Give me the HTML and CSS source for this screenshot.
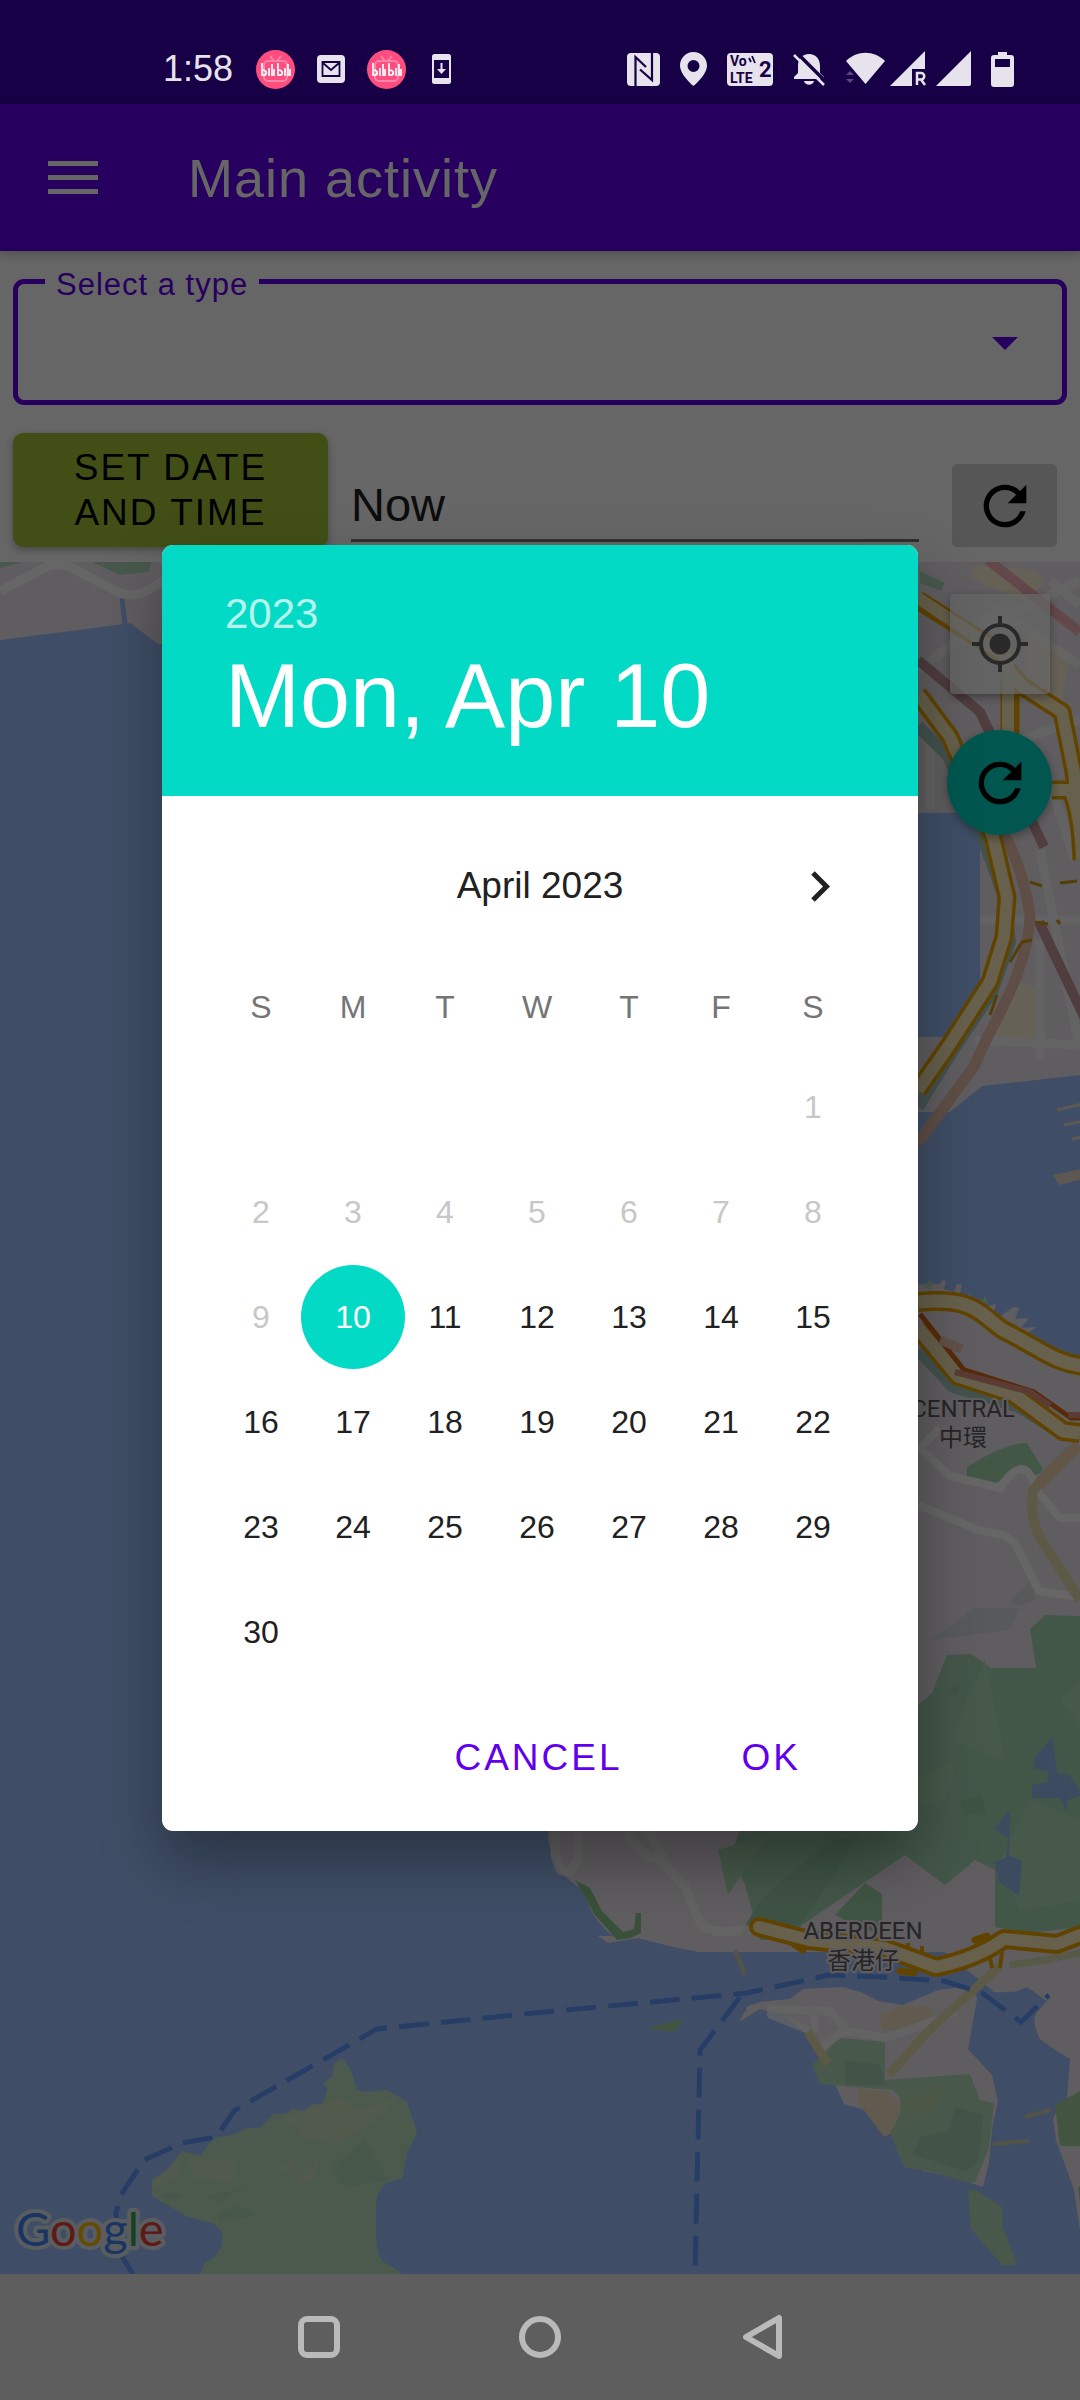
FILE: index.html
```html
<!DOCTYPE html>
<html lang="en">
<head>
<meta charset="utf-8">
<meta name="viewport" content="width=device-width">
<title>Main activity</title>
<link rel="stylesheet" href="styles.css">
</head>
<body>
<header class="status">
  <div class="status-side status-left">
    <span class="clock">1:58</span>
    <svg width="39" height="39" viewBox="0 0 39 39"><circle cx="19.500" cy="19.500" r="19.500" fill="#ff4d80"/><g fill="none" stroke="#ff86a8" stroke-width="2"><rect x="8" y="11" width="23" height="20" rx="4"/><path d="M14 6l4 5M25 6l-4 5"/></g><path d="M6 13v12c5 1 6-4 1-5M13 18v8M16 14v12M18 19v7M22 13v12c5 1 6-4 1-5M29 18v8M32 14v12M34 19v7" fill="none" stroke="#fff" stroke-width="1.700"/></svg>
    <svg width="28" height="28" viewBox="0 0 28 28"><rect width="28" height="28" rx="4" fill="#e6e3ec"/><path d="M5.500 7h17v14h-17zM6 8l8 7 8-7" fill="none" stroke="#170045" stroke-width="1.800"/></svg>
    <svg width="39" height="39" viewBox="0 0 39 39"><circle cx="19.500" cy="19.500" r="19.500" fill="#ff4d80"/><g fill="none" stroke="#ff86a8" stroke-width="2"><rect x="8" y="11" width="23" height="20" rx="4"/><path d="M14 6l4 5M25 6l-4 5"/></g><path d="M6 13v12c5 1 6-4 1-5M13 18v8M16 14v12M18 19v7M22 13v12c5 1 6-4 1-5M29 18v8M32 14v12M34 19v7" fill="none" stroke="#fff" stroke-width="1.700"/></svg>
    <svg width="24" height="30" viewBox="0 0 24 30"><rect x="4" width="19" height="30" rx="2.500" fill="#e6e3ec"/><path d="M6 6h15v18H6z" fill="#170045"/><path d="M12.500 9h2v6h3.500l-4.500 5-4.500-5h3.500z" fill="#e6e3ec"/></svg>
  </div>
  <div class="status-side">
    <svg width="33" height="33" viewBox="0 0 33 33"><rect width="33" height="33" rx="4" fill="#e6e3ec"/><path d="M8.500 33V4L19 14M25 0v27L13 16.500" fill="none" stroke="#170045" stroke-width="2.200"/></svg>
    <svg width="27" height="34" viewBox="0 0 27 34"><path fill-rule="evenodd" d="M13.500 0C6 0 0 6 0 13.500 0 23 13.500 34 13.500 34S27 23 27 13.500C27 6 21 0 13.500 0zm0 8a6 6 0 110 12 6 6 0 010-12z" fill="#e6e3ec"/></svg>
    <svg class="volte" width="46" height="33" viewBox="0 0 46 33"><rect width="46" height="33" rx="4" fill="#e6e3ec"/><text class="volte-small" x="3" y="13">Vo</text><text class="volte-small" x="3" y="30">LTE</text><text class="volte-big" x="32" y="24">2</text><path d="M22 5l2 4M25 3l3 7" stroke="#170045" stroke-width="1.800"/></svg>
    <svg width="33" height="33" viewBox="0 0 33 33"><path d="M16 1c7 0 11 5 11 12v7l4 4v2H1v-2l4-4v-7C5 6 9 1 16 1zM11 28h10c-1 5-9 5-10 0z" fill="#e6e3ec"/><path d="M3-1l31 31" stroke="#170045" stroke-width="3.500"/><path d="M1 2l30 30" stroke="#e6e3ec" stroke-width="2.500"/></svg>
    <svg width="125" height="36" viewBox="0 0 125 36"><path d="M0 10C11-1 28-1 39 10L19.500 33z" fill="#e6e3ec"/><path d="M0 24l4-4 4 4zM0 28h8l-4 4z" fill="#5a4a7c"/><path d="M44 35L79 0v18H66v17z" fill="#e6e3ec"/><path d="M71 34V22h4a3 3 0 010 6.500h-4M75 28.500l4 5.500" fill="none" stroke="#e6e3ec" stroke-width="2.500"/><path d="M90 35l35-35v33q0 2-2 2z" fill="#e6e3ec"/></svg>
    <svg width="23" height="35" viewBox="0 0 23 35"><path fill-rule="evenodd" d="M7 0h9v3h4q3 0 3 3v26q0 3-3 3H3q-3 0-3-3V6q0-3 3-3h4zM4 7v8h15V7z" fill="#e6e3ec"/></svg>
  </div>
</header>

<main class="app">
  <div class="appbar">
    <button class="plain" aria-label="Open menu"><svg width="50" height="34" viewBox="0 0 50 34"><path d="M0 0h50v5H0zM0 14h50v5H0zM0 28h50v5H0z" fill="#fff"/></svg></button>
    <h1 class="title">Main activity</h1>
  </div>

  <form class="form">
    <fieldset class="outlined">
      <legend class="legend"><label for="type">Select a type</label></legend>
      <select class="type" id="type"><option></option></select>
      <svg class="arrow" width="26" height="13" viewBox="0 0 26 13"><path d="M0 0h26L13 13z" fill="#6200ee"/></svg>
    </fieldset>
    <div class="date-row">
      <button class="set-date" type="button">SET DATE<br>AND TIME</button>
      <input class="when" type="text" value="Now" aria-label="Date and time">
      <button class="reset" type="button" aria-label="Reset"><svg width="64" height="64" viewBox="0 0 24 24"><path d="M17.650 6.350C16.200 4.900 14.210 4 12 4c-4.420 0-7.990 3.580-7.990 8s3.570 8 7.990 8c3.730 0 6.840-2.550 7.730-6h-2.080c-.82 2.330-3.040 4-5.650 4-3.310 0-6-2.690-6-6s2.690-6 6-6c1.660 0 3.140.69 4.220 1.780L13 11h7V4z"/></svg></button>
    </div>
  </form>

  <section class="map">
    <svg class="map-art" viewBox="0 562 1080 1712" preserveAspectRatio="xMidYMid slice">
      <path d="M0 562h1080v1712H0z" fill="#9fc3ff"/>
      <!-- north-west peninsula -->
      <g fill="none">
        <path d="M0 562h170v82h-12l-28-21-5 1L0 640z" fill="#f0e8ef"/>
        <path d="M122 598l3 26" stroke="#9fc3ff" stroke-width="5"/>
        <path d="M92 562h60l-4 10-28 3zM0 562h22l-22 6z" fill="#b4dcc0"/>
        <path d="M0 591l42-22q16-9 34 1l44 23q14 5 28-3l20-12" stroke="#fff" stroke-width="9"/>
      </g>
      <!-- Kowloon -->
      <g transform="translate(900 540)" fill="none" stroke-linejoin="round">
        <path d="M0 20h180v515l-98 11-32 26H0v-75h45l35-30V273H0z" fill="#f0e8ef"/>
        <path d="M20 31l25 12-4 8-21-8z" fill="#b4dcc0"/>
        <path d="M75 25l60 5 10 12-20 20-55-25zM130 90l40 25-10 55-38-10zM115 440l20 8v50l-45-2z" fill="#fff3d8"/>
        <path d="M18 130l80-60 82 55M60 100l120-60M120 200l60-20M145 230l30 90M80 380h100M140 400v120M75 500l105 5M140 310l40 200M30 200v70M35 180l45 90M150 40l30 25" stroke="#fff" stroke-width="9" stroke-opacity=".7"/>
        <path d="M88 20l92 72" stroke="#f5b3b8" stroke-width="10"/>
        <path d="M18 120l62 52 64 135M139 382l50 105" stroke="#c59a9e" stroke-width="10"/>
        <path d="M18 186l30 30 32 75 24 66 6 45-18 50-40 60-34 55" stroke="#a9cdc6" stroke-width="12"/>
        <path d="M102 290q22 40 28 85c-2 60-40 110-55 150l-57 78" stroke="#ecc4ae" stroke-width="11"/>
        <g stroke="#f2a900" stroke-width="19"><path d="M18 60l87 55M110 140v55M108 130l14 16 40 26 12 60 6 60M152 250h18q10 20 12 70"/><path d="M18 154l32 43 43 100 14 60-3 40-14 45-42 65-30 43"/></g>
        <g stroke="#fff0be" stroke-width="12"><path d="M18 58l90 60v80M108 130l14 16 40 26 12 60 6 60M152 250h18q10 20 12 70"/><path d="M18 154l32 43 43 100 14 60-3 40-14 45-42 65-30 43"/></g>
        <path d="M130 342l12 4m-7 36l13 2m-38 38l12-20 10-2m25-20l3 4M97 455l-7 20M160 343l17-2" stroke="#d39a10" stroke-width="3"/>
        <path d="M157 570l30-7M164 585l24-5M172 599l15-3" stroke="#e8dccf" stroke-width="3"/>
        <path d="M153 635l6 10 28-7v-10z" fill="#e8dccf"/>
      </g>
      <!-- Hong Kong island, north shore -->
      <g transform="translate(900 1200)">
        <path d="M0 85l40-1 2-4 4 1-2 8 10 3 3-8 5 1-2 9 6 3 4-3 2 5 14 8 10-3-3 10 8 2 12-9 6 1-4 11 14-1-8 10 15-1-12 9q30 25 56 28v500H0z" fill="#f0e8ef"/>
        <path d="M24 88l5-8 4 2-2 8zM80 102l5-6 3 8z" fill="#b9e6c3"/>
      </g>
      <path d="M552 1828H1080V1955l-36 10q-15 30-50 27-30-25-50-40l-245 0-26-5-35-9-30 5-10-7H613q-20-15-30-45l-22-18-8-14-5-20 2-34z" fill="#f0e8ef"/>
      <g fill="none" stroke-linejoin="round">
        <path d="M967 1467c20-12 40-24 60-24l16 26c-6 12-20 0-30 2l-18 13-28-7z" fill="#a5d9ae"/>
        <path d="M918 1705l14-12 15-38 24-1 20 14h45l-6-39 15-14 35 1V1927l-50 6-35-6v-57l-20-10-30 25-40-30-125 85-20 0-15-55-14-30 18-50z" fill="#a8dab6"/>
        <path d="M930 1640l45-32 45 0-10 22zM1010 1602l25-26 0 24-16 6z" fill="#dcdee0"/>
        <path d="M920 1780l40-25-15 45-27 6zM1060 1700l20-20v45zM985 1660l20 100-55-20zM1000 1860l30-60 50 20v80l-60 10zM718 1850l50-15-40 60z" fill="#b2dfba"/>
        <path d="M950 1690l10-8-2 15zM960 1800l22-5 4 18-20 2zM760 1900l70-60 30-5-60 90-60 10z" fill="#9dd0ac"/>
        <path d="M1053 1737l-17 18-3 13 16 4-2 10-15 3v13l28 0 7 14 0-12 16-5-14-20-12-2zM1010 1810l-16 18 14 10-2 20-12 4 5 20 20 14 3-35-13-6z" fill="#98bbf2"/>
        <path d="M940 1428l-20 20 30 28 50 12c20-30 30-20 35 0l25 30h20M918 1505l60 25 25 5 12 8 24 48 41 6" stroke="#fff" stroke-width="8"/>
        <path d="M1078 1445l-45 45q-5 35 15 60l32 50" stroke="#e6dfb0" stroke-width="10"/>
        <path d="M1078 1445l-40 40" stroke="#f0d5b0" stroke-width="12"/>
        <path d="M918 1350l35 37 66 20 40 25 25 2" stroke="#a9cdc6" stroke-width="12"/>
        <path d="M918 1302c55-5 60 10 85 28 40 20 50 32 80 36M918 1328l40 48 55 18 50 37 17 2" stroke="#f2a900" stroke-width="20"/>
        <path d="M918 1302c55-5 60 10 85 28 40 20 50 32 80 36M918 1328l40 48 55 18 50 37 17 2" stroke="#fff0be" stroke-width="13"/>
        <path d="M920 1314l44 56 70 22 37 26h12" stroke="#d86a1a" stroke-width="5"/>
        <path d="M940 1340l22 9" stroke="#f0c8b4" stroke-width="9"/>
        <path d="M955 1372l75 20 20 14M1068 1415h12" stroke="#e79485" stroke-width="6"/>
      </g>
      <!-- southern coast and Ap Lei Chau -->
      <g fill="none" stroke-linejoin="round">
        <path d="M575 1880l15 8 12 23 21 21 11-3 2-16 5 0 0 20-10 5-14 2-22-25z" fill="#8fc795"/>
        <path d="M835 1915l30-32 17 11v40l-20-5z" fill="#a0d5ab"/>
        <path d="M555 1832v23l5 15 10 2 8-14v-26M625 1835l25 24 12-5-15-24M655 1855l30 32 15 35q10 12 30 9l25-2" stroke="#fff" stroke-width="9" stroke-opacity=".7"/>
        <path d="M739 2022l9-16 12-4 30-3 13-10 40-2 20 6 15 8 25 4 35-15 25-3 12 2 2 10-9 50 24 26 6 27-5 20-4 40-6 25-6-2-36-11-18-3-14-22-20-32-45-13-10-22-5-25-20-22-26-20-23-6z" fill="#f0e8ef"/>
        <path d="M880 2015l20-9 30 0 4 10-30 14h-22zM857 2089l32 2 12 15-5 25-12 6-26-35z" fill="#f2e2c4"/>
        <path d="M812 2065l28-27 45 4v38l85-6 10 26 14 3-5 45-14 34-6 1-35-11-30-5-14-34q20-30 3-43l-73-6z" fill="#b4dcb8"/>
        <path d="M968 2190l8 0 26 17 1 20 14 37-14 2-32-37z" fill="#b4dcb8"/>
        <path d="M955 2107l28 8-4 45-12 12-55-18 10-18 27-5zM845 2060l35 5 5 20h-40z" fill="#a4d2b2"/>
        <path d="M900 2100l46-18-10 28-30 10z" fill="#bcdcb2"/>
        <path d="M809 2030l-38-15v-6l60 2 15 20 40 7 50-18 20-8M815 2012v20M820 2048l25-18" stroke="#fff" stroke-width="8" stroke-opacity=".7"/>
        <path d="M1080 1940v290l-6-40-18-50-3-22 3-5 11-14 3-40-19-12-11-8q-10-20-2-28l9-10-20-14-12 5-20-3-20-14 20-25z" fill="#f0e8ef"/>
        <path d="M1000 1966l-62 56-15 15-34 38" stroke="#e5dfae" stroke-width="9"/>
        <path d="M808 2032l20 32" stroke="#e5dfae" stroke-width="9"/>
        <path d="M1055 2105l25-14v55h-20zM1078 2187h2v16zM647 2028l37-9-10 13z" fill="#a5d5a0"/>
        <path d="M1025 2117l25-7M993 2144l36-3M735 1950l10 25" stroke="#cdd3b4" stroke-width="4"/>
        <path d="M1010 1965l35-5 35-7" stroke="#dbe0b4" stroke-width="7"/>
        <path d="M795 1945l8 5M900 1971l14 2M975 1940l12-4" stroke="#f2a900" stroke-width="7" stroke-linecap="round"/>
        <path d="M908 1955v-12M922 1960v-14M990 1958l2 10M1002 1952l-2 16" stroke="#f2a900" stroke-width="4"/>
        <path d="M759 1927l50 13 75 8 52 19q40-8 68-28l53 5 23-9" stroke="#f2a900" stroke-width="20" stroke-linecap="round"/>
        <path d="M759 1927l50 13 75 8 52 19q40-8 68-28l53 5 23-9" stroke="#fff0be" stroke-width="12" stroke-linecap="round"/>
      </g>
      <!-- Lamma -->
      <path d="M201 2274l3-10 12-8 6-11v-13l-8-8-28-8-34-20v-17l14-8 16-20 18 5 14-18 18-3 15-7h13l14-14h12l6-5 12 2 8-7h10l6-15-5-6 9-6 2-12 8-7 9 12 6 20 8 2 22-2 20 12 10 31-10 20-5 25-16 5q-10 10-10 20v30q0 20 6 28l14 8 11 9z" fill="#bde0c0"/>
      <path d="M283 2116l23-5 35-14 20 14 28-12-2 12-46 32-33-3zM189 2159h48l-6 23-38-4zM153 2182l26-22v16l-26 14zM272 2168l24-6-6 10zM298 2178l22-20-8 25z" fill="#cddfc1"/>
      <path d="M330 2170l35-32 24 42-45 8zM205 2197l40-10-25 15zM160 2194l22 0-4 8zM218 2214l20-10 20 12-40 6zM400 2143h10l-8 25z" fill="#b2d9ba"/>
      <g fill="none" stroke="#5f9bff" stroke-width="5" stroke-dasharray="30 12">
        <path d="M133 2274l-12-19-5-42 5-18 23-35 38-17 34-6 19-27 142-81 158-16 212-20 60-13 21-5 53 2 63 4 38 12 39 29 28-27"/>
        <path d="M740 1997l-40 53-5 224"/>
      </g>
      <g class="place" text-anchor="middle">
        <text x="963" y="1417">CENTRAL</text><text x="963" y="1446">中環</text>
        <text x="863" y="1939">ABERDEEN</text><text x="863" y="1969">香港仔</text>
      </g>
      <text class="google" x="16" y="2246"><tspan fill="#4285f4">G</tspan><tspan fill="#ea4335">o</tspan><tspan fill="#fbbc05">o</tspan><tspan fill="#4285f4">g</tspan><tspan fill="#34a853">l</tspan><tspan fill="#ea4335">e</tspan></text>
    </svg>
    <div class="map-tools">
      <button class="locate" type="button" aria-label="My location"><svg width="56" height="56" viewBox="0 0 56 56"><circle cx="28" cy="28" r="10.500" fill="#666"/><circle cx="28" cy="28" r="19" fill="none" stroke="#666" stroke-width="4"/><path d="M28 0v9M28 47v9M0 28h9M47 28h9" stroke="#666" stroke-width="4"/></svg></button>
      <button class="fab" type="button" aria-label="Refresh map"><svg width="64" height="64" viewBox="0 0 24 24"><path d="M17.650 6.350C16.200 4.900 14.210 4 12 4c-4.420 0-7.990 3.580-7.990 8s3.570 8 7.990 8c3.730 0 6.840-2.550 7.730-6h-2.080c-.82 2.330-3.040 4-5.650 4-3.310 0-6-2.690-6-6s2.690-6 6-6c1.660 0 3.140.69 4.220 1.780L13 11h7V4z"/></svg></button>
    </div>
  </section>

  <div class="scrim">
    <section class="dialog" role="dialog" aria-label="Choose date">
      <header class="dialog-head">
        <button class="year" type="button">2023</button>
        <h2 class="picked">Mon, Apr 10</h2>
      </header>
      <div class="month">
        <span></span>
        <span class="month-name">April 2023</span>
        <button class="next" type="button" aria-label="Next month"><svg width="20" height="31" viewBox="0 0 20 31"><path d="M2 2l13.500 13.500L2 29" fill="none" stroke="#212121" stroke-width="5"/></svg></button>
      </div>
      <table class="days">
        <thead><tr><th>S</th><th>M</th><th>T</th><th>W</th><th>T</th><th>F</th><th>S</th></tr></thead>
        <tbody>
          <tr><td></td><td></td><td></td><td></td><td></td><td></td><td><button disabled>1</button></td></tr>
          <tr><td><button disabled>2</button></td><td><button disabled>3</button></td><td><button disabled>4</button></td><td><button disabled>5</button></td><td><button disabled>6</button></td><td><button disabled>7</button></td><td><button disabled>8</button></td></tr>
          <tr><td><button disabled>9</button></td><td><button class="selected">10</button></td><td><button>11</button></td><td><button>12</button></td><td><button>13</button></td><td><button>14</button></td><td><button>15</button></td></tr>
          <tr><td><button>16</button></td><td><button>17</button></td><td><button>18</button></td><td><button>19</button></td><td><button>20</button></td><td><button>21</button></td><td><button>22</button></td></tr>
          <tr><td><button>23</button></td><td><button>24</button></td><td><button>25</button></td><td><button>26</button></td><td><button>27</button></td><td><button>28</button></td><td><button>29</button></td></tr>
          <tr><td><button>30</button></td><td></td><td></td><td></td><td></td><td></td><td></td></tr>
        </tbody>
      </table>
      <div class="actions">
        <button type="button">CANCEL</button>
        <button type="button">OK</button>
      </div>
    </section>
  </div>
</main>

<nav class="navbar">
  <button class="plain" aria-label="Recent apps"><svg width="44" height="46" viewBox="0 0 44 46"><rect x="4" y="5" width="36" height="36" rx="6" fill="none" stroke="#bababa" stroke-width="6"/></svg></button>
  <button class="plain" aria-label="Home"><svg width="44" height="46" viewBox="0 0 44 46"><circle cx="22" cy="23" r="18" fill="none" stroke="#bababa" stroke-width="6"/></svg></button>
  <button class="plain" aria-label="Back"><svg width="44" height="46" viewBox="0 0 44 46"><path d="M40 4v38L7 23z" fill="none" stroke="#bababa" stroke-width="6" stroke-linejoin="round"/></svg></button>
</nav>
</body>
</html>
```
FILE: styles.css
```css
* { box-sizing: border-box; }

body {
  margin: 0;
  min-height: 100vh;
  display: flex;
  flex-direction: column;
  background: #fff;
  font-family: "Liberation Sans", "Noto Sans CJK TC", sans-serif;
}

button, input, select {
  margin: 0;
  padding: 0;
  border: 0;
  background: none;
  font: inherit;
  color: inherit;
}

svg { display: block; flex: none; }

.plain { display: grid; place-items: center; }

/* Status bar */
.status {
  height: 104px;
  padding: 34px 66px 0 163px;
  display: flex;
  justify-content: space-between;
  background: #170045;
}

.status-side { display: flex; align-items: center; gap: 20px; height: 70px; }
.status-left { gap: 22px; }
.clock { font-size: 36px; line-height: 40px; color: #e6e3ec; margin-right: 1px; }
.volte { fill: #170045; font-family: Roboto, sans-serif; font-weight: 700; }
.volte-small { font-size: 14px; }
.volte-big { font-size: 22px; }

/* App */
.app {
  position: relative;
  flex: 1;
  display: flex;
  flex-direction: column;
}

.appbar {
  height: 147px;
  padding: 0 48px;
  display: flex;
  align-items: center;
  gap: 90px;
  background: #6200ee;
  color: #fff;
  box-shadow: 0 3px 10px rgba(0, 0, 0, .25);
}

.title { margin: 0; font-size: 54px; line-height: 60px; font-weight: 400; letter-spacing: 1px; }

.form { padding: 6px 13px 15px; }

.outlined {
  position: relative;
  margin: 0;
  padding: 0 44px 0 27px;
  border: 5px solid #6200ee;
  border-radius: 11px;
  height: 148px;
}

.legend {
  padding: 8px 11px 0;
  font-size: 31px;
  line-height: 40px;
  letter-spacing: 1px;
  color: #6200ee;
}

.type { appearance: none; display: block; width: 100%; height: 90px; }
.arrow { position: absolute; right: 44px; top: 32px; pointer-events: none; }

.date-row {
  margin-top: 28px;
  padding-right: 10px;
  display: flex;
  align-items: flex-end;
}

.set-date {
  width: 315px;
  height: 114px;
  border-radius: 10px;
  background: #a4c639;
  color: #000;
  font-size: 37px;
  line-height: 45px;
  letter-spacing: 2px;
  box-shadow: 0 3px 8px rgba(0, 0, 0, .3);
}

.when {
  flex: 1;
  min-width: 0;
  height: 86px;
  margin: 0 33px 5px 23px;
  padding-top: 14px;
  border-bottom: 3px solid #757575;
  font-size: 47px;
  line-height: 60px;
  color: #212121;
}

.reset {
  width: 105px;
  height: 83px;
  display: grid;
  place-items: center;
  border-radius: 5px;
  background: #d6d7d7;
}

/* Map */
.map { position: relative; flex: 1; min-height: 400px; background: #9fc3ff; }
.map-art { position: absolute; inset: 0; width: 100%; height: 100%; }

.place {
  font-family: Roboto, "Noto Sans CJK TC", sans-serif;
  font-size: 24px;
  fill: #5c5c5c;
  stroke: #f0e8ef;
  stroke-width: 4px;
  stroke-linejoin: round;
  paint-order: stroke;
}

.google {
  font-family: Lato, sans-serif;
  font-size: 47px;
  font-weight: 400;
  stroke: #dfe6f0;
  stroke-width: 8px;
  stroke-linejoin: round;
  paint-order: stroke;
}

.map-tools {
  position: absolute;
  top: 32px;
  right: 28px;
  display: flex;
  flex-direction: column;
  align-items: center;
  gap: 36px;
}

.locate, .fab { display: grid; place-items: center; box-shadow: 0 3px 10px rgba(0, 0, 0, .35); }
.locate { width: 100px; height: 100px; border-radius: 4px; background: rgba(255, 255, 255, .7); }
.fab { width: 105px; height: 105px; border-radius: 50%; background: #03dac5; }

/* Date picker */
.scrim {
  position: absolute;
  inset: 0;
  padding-bottom: 2px;
  display: grid;
  place-items: center;
  background: rgba(0, 0, 0, .6);
}

.dialog {
  width: 70%;
  border-radius: 11px;
  overflow: hidden;
  background: #fff;
  box-shadow: 0 30px 60px rgba(0, 0, 0, .35);
}

.dialog-head { height: 251px; padding: 45px 63px 0; background: #03dac5; color: #fff; }
.year { display: block; font-size: 42px; line-height: 48px; opacity: .7; }
.picked { margin: 0; font-size: 90px; line-height: 116px; font-weight: 400; }

.month {
  padding: 32px 87px 15px;
  display: grid;
  grid-template-columns: 40px 1fr 40px;
  align-items: center;
  height: 163px;
}

.month-name { text-align: center; font-size: 37px; line-height: 44px; color: #212121; }
.next { display: grid; justify-content: end; }

.days {
  width: calc(100% - 112px);
  margin: 0 59px 0 53px;
  table-layout: fixed;
  border-collapse: collapse;
  font-size: 32px;
  line-height: 36px;
  color: #212121;
}

.days th { height: 95px; padding: 0; font-weight: 400; color: #757575; }
.days td { height: 105px; padding: 0; }
.days button { display: block; width: 104px; height: 104px; margin: 0 -6px; border-radius: 50%; }
.days button:disabled { color: #c7c7c7; }
.days .selected { background: #03dac5; color: #fff; }

.actions {
  height: 147px;
  padding-right: 75px;
  display: flex;
  justify-content: flex-end;
  align-items: center;
  gap: 35px;
}

.actions button {
  height: 94px;
  padding: 0 42px;
  font-size: 37px;
  letter-spacing: 3px;
  color: #6200ee;
}

/* Navigation bar */
.navbar {
  height: 126px;
  display: flex;
  justify-content: center;
  align-items: center;
  gap: 177px;
  background: #5e5e5e;
}
```
